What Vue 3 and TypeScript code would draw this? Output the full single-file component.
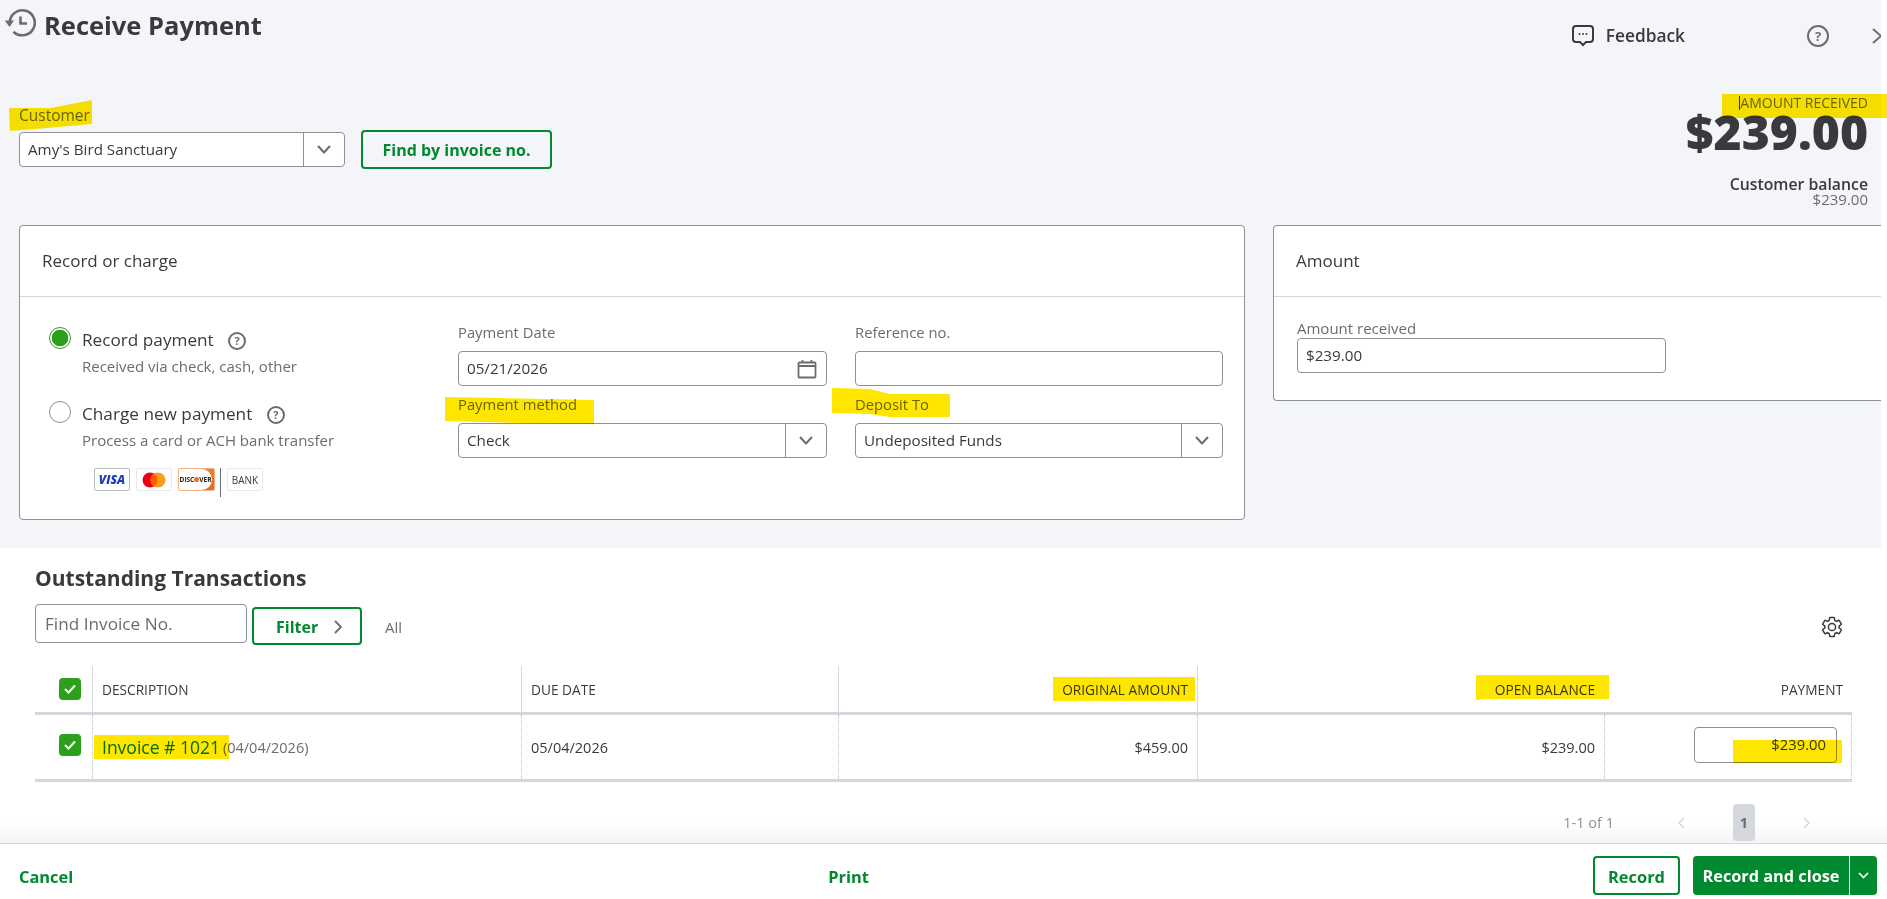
<template>
  <div class="page">
    <section class="top">
      <header class="title-bar">
        <svg class="history" width="32" height="32" viewBox="0 0 32 32">
          <path d="M5.8 15A12.5 12.5 0 1 1 9.5 24.7" fill="none" stroke="#6b6c72" stroke-width="2.6" />
          <path d="M.8 13.5H10L5.5 20z" fill="#6b6c72" />
          <path d="M16.5 9.5v7H23" fill="none" stroke="#6b6c72" stroke-width="2.6" />
        </svg>
        <h1>Receive Payment</h1>
        <div class="title-actions">
          <svg width="22" height="23" viewBox="0 0 22 23">
            <path d="M4 2h14a3 3 0 0 1 3 3v10a3 3 0 0 1-3 3h-4l-3 3-3-3H4a3 3 0 0 1-3-3V5a3 3 0 0 1 3-3z" fill="none" stroke="#393a3d" stroke-width="2" />
            <circle cx="7.5" cy="10" r="1" fill="#393a3d" />
            <circle cx="11" cy="10" r="1" fill="#393a3d" />
            <circle cx="14.5" cy="10" r="1" fill="#393a3d" />
          </svg>
          <span class="feedback">Feedback</span>
          <span class="help help-lg">?</span>
          <svg class="drawer" width="9" height="16" viewBox="0 0 9 16">
            <path d="M1 1l8 7-8 7" fill="none" stroke="#6b6c72" stroke-width="2" />
          </svg>
        </div>
      </header>

      <div class="customer-row">
        <div class="customer">
          <label>Customer</label>
          <div class="customer-fields">
            <div class="select customer-select">
              <span class="select-value">Amy's Bird Sanctuary</span>
              <span class="select-arrow">
                <svg width="14" height="9" viewBox="0 0 14 9"><path d="M1 1l6 6.5L13 1" fill="none" stroke="#6b6c72" stroke-width="2" /></svg>
              </span>
            </div>
            <button class="btn btn-outline find-btn">Find by invoice no.</button>
          </div>
        </div>
        <div class="total">
          <div class="total-label"><span class="caret"></span>AMOUNT RECEIVED</div>
          <div class="total-value">$239.00</div>
          <div class="balance-label">Customer balance</div>
          <div class="balance-value">$239.00</div>
        </div>
      </div>

      <div class="cards">
        <div class="card record-card">
          <div class="card-head">Record or charge</div>
          <div class="card-body">
            <div class="pay-opts">
              <div class="opt">
                <span class="radio radio-on"></span>
                <div>
                  <div class="opt-title">Record payment <span class="help">?</span></div>
                  <div class="opt-sub">Received via check, cash, other</div>
                </div>
              </div>
              <div class="opt opt-2">
                <span class="radio"></span>
                <div>
                  <div class="opt-title">Charge new payment <span class="help">?</span></div>
                  <div class="opt-sub">Process a card or ACH bank transfer</div>
                </div>
              </div>
              <div class="logos">
                <span class="logo logo-visa">VISA</span>
                <span class="logo logo-mc">
                  <svg width="24" height="16" viewBox="0 0 24 16">
                    <circle cx="8" cy="8" r="7.5" fill="#eb001b" />
                    <circle cx="16" cy="8" r="7.5" fill="#f79e1b" />
                    <path d="M12 1.6a7.5 7.5 0 0 1 0 12.8a7.5 7.5 0 0 1 0-12.8z" fill="#ff5f00" />
                  </svg>
                </span>
                <span class="logo logo-disc"><span class="disc-inner">DISC<i></i>VER</span></span>
                <span class="logo-sep"></span>
                <span class="logo logo-bank">BANK</span>
              </div>
            </div>
            <div class="fields">
              <div class="field">
                <label>Payment Date</label>
                <div class="input">
                  05/21/2026
                  <svg class="cal" width="20" height="20" viewBox="0 0 20 20">
                    <path d="M2.5 3.5h15a1 1 0 0 1 1 1v13a1 1 0 0 1-1 1h-15a1 1 0 0 1-1-1v-13a1 1 0 0 1 1-1z" fill="none" stroke="#6b6c72" stroke-width="1.8" />
                    <path d="M1.5 7h17M5.5 1v3M14.5 1v3" fill="none" stroke="#6b6c72" stroke-width="1.8" />
                  </svg>
                </div>
              </div>
              <div class="field">
                <label>Reference no.</label>
                <div class="input"></div>
              </div>
              <div class="field">
                <label>Payment method</label>
                <div class="select">
                  <span class="select-value">Check</span>
                  <span class="select-arrow">
                    <svg width="14" height="9" viewBox="0 0 14 9"><path d="M1 1l6 6.5L13 1" fill="none" stroke="#6b6c72" stroke-width="2" /></svg>
                  </span>
                </div>
              </div>
              <div class="field">
                <label>Deposit To</label>
                <div class="select">
                  <span class="select-value">Undeposited Funds</span>
                  <span class="select-arrow">
                    <svg width="14" height="9" viewBox="0 0 14 9"><path d="M1 1l6 6.5L13 1" fill="none" stroke="#6b6c72" stroke-width="2" /></svg>
                  </span>
                </div>
              </div>
            </div>
          </div>
        </div>

        <div class="card amount-card">
          <div class="card-head">Amount</div>
          <div class="amount-body">
            <label>Amount received</label>
            <div class="input amount-input">$239.00</div>
          </div>
        </div>
      </div>
    </section>

    <section class="bottom">
      <h2>Outstanding Transactions</h2>
      <div class="toolbar">
        <div class="find-input">Find Invoice No.</div>
        <button class="btn btn-outline filter-btn">
          Filter
          <svg width="8" height="14" viewBox="0 0 8 14"><path d="M1 1l6 6-6 6" fill="none" stroke="#6b6c72" stroke-width="1.8" /></svg>
        </button>
        <span class="all">All</span>
        <svg class="gear" width="24" height="24" viewBox="0 0 24 24">
          <path d="M19.14 12.94c.04-.3.06-.61.06-.94 0-.32-.02-.64-.07-.94l2.03-1.58c.18-.14.23-.41.12-.61l-1.92-3.32c-.12-.22-.37-.29-.59-.22l-2.39.96c-.5-.38-1.03-.7-1.62-.94l-.36-2.54c-.04-.24-.24-.41-.48-.41h-3.84c-.24 0-.43.17-.47.41l-.36 2.54c-.59.24-1.13.57-1.62.94l-2.39-.96c-.22-.08-.47 0-.59.22L2.74 8.87c-.12.21-.08.47.12.61l2.03 1.58c-.05.3-.09.63-.09.94s.02.64.07.94l-2.03 1.58c-.18.14-.23.41-.12.61l1.92 3.32c.12.22.37.29.59.22l2.39-.96c.5.38 1.03.7 1.62.94l.36 2.54c.05.24.24.41.48.41h3.84c.24 0 .44-.17.47-.41l.36-2.54c.59-.24 1.13-.56 1.62-.94l2.39.96c.22.08.47 0 .59-.22l1.92-3.32c.12-.22.07-.47-.12-.61l-2.01-1.58zM12 15.6c-1.98 0-3.6-1.62-3.6-3.6s1.62-3.6 3.6-3.6 3.6 1.62 3.6 3.6-1.62 3.6-3.6 3.6z" fill="none" stroke="#393a3d" stroke-width="1.5" />
        </svg>
      </div>

      <div class="table">
        <div class="tr th">
          <div class="td td-check"><span class="check"><svg width="14" height="12" viewBox="0 0 14 12"><path d="M2 6l3.5 3.5L12 2.5" fill="none" stroke="#fff" stroke-width="2" /></svg></span></div>
          <div class="td">DESCRIPTION</div>
          <div class="td">DUE DATE</div>
          <div class="td right">ORIGINAL AMOUNT</div>
          <div class="td right">OPEN BALANCE</div>
          <div class="td right no-line">PAYMENT</div>
        </div>
        <div class="tr body-row">
          <div class="td td-check"><span class="check"><svg width="14" height="12" viewBox="0 0 14 12"><path d="M2 6l3.5 3.5L12 2.5" fill="none" stroke="#fff" stroke-width="2" /></svg></span></div>
          <div class="td"><a class="invoice">Invoice # 1021</a> <span class="inv-date">(04/04/2026)</span></div>
          <div class="td">05/04/2026</div>
          <div class="td right">$459.00</div>
          <div class="td right">$239.00</div>
          <div class="td right pay-cell"><div class="pay-input">$239.00</div></div>
        </div>
      </div>

      <div class="pager">
        <span class="pager-count">1-1 of 1</span>
        <svg class="pager-prev" width="7" height="12" viewBox="0 0 7 12"><path d="M6 1L1 6l5 5" fill="none" stroke="#d4d7dc" stroke-width="1.5" /></svg>
        <span class="pager-page">1</span>
        <svg class="pager-next" width="7" height="12" viewBox="0 0 7 12"><path d="M1 1l5 5-5 5" fill="none" stroke="#d4d7dc" stroke-width="1.5" /></svg>
      </div>
    </section>

    <footer class="footer">
      <a class="foot-link">Cancel</a>
      <a class="foot-link print">Print</a>
      <div class="foot-actions">
        <button class="btn btn-outline record-btn">Record</button>
        <div class="btn-split">
          <span class="split-main">Record and close</span>
          <span class="split-arrow">
            <svg width="11" height="7" viewBox="0 0 11 7"><path d="M1 1l4.5 4.5L10 1" fill="none" stroke="#fff" stroke-width="1.6" /></svg>
          </span>
        </div>
      </div>
    </footer>

    <!-- marker strokes that were drawn on top of the screenshot -->
    <svg class="marks" width="1887" height="899" viewBox="0 0 1887 899">
      <polygon v-for="m in marks" :key="m" :points="m" fill="#ffe600" />
    </svg>
  </div>
</template>

<script setup lang="ts">
const marks: string[] = [
  '9,108 51,108 92,100 92,124 47,128 10,131',
  '1722,94 1887,94 1887,118 1722,118',
  '445,397 594,400 594,424 520,423 445,421',
  '832,388 870,389 890,394 950,394 950,417 890,417 870,414 832,413',
  '1053,677 1195,677 1195,701 1053,701',
  '1476,675 1609,675 1609,699 1486,699 1476,700',
  '94,735 229,735 229,759 94,759',
  '1733,740 1842,740 1842,763 1733,763'
]
</script>

<style>
html, body {
  margin: 0;
  background: #fff;
}
</style>

<style scoped>
.page {
  position: relative;
  width: 1887px;
  height: 899px;
  display: flex;
  flex-direction: column;
  overflow: hidden;
  background: #fff;
  color: #393a3d;
  font-family: "Open Sans", "Noto Sans", "Liberation Sans", sans-serif;
  font-size: 14.5px;
}

.top {
  width: 1881px;
  height: 548px;
  flex: none;
  background: #f4f5f8;
}

.title-bar {
  height: 94px;
  display: flex;
  align-items: flex-start;
}

.history {
  margin: 7px 0 0 4px;
}

h1 {
  margin: 9px 0 0 8px;
  font-size: 25.5px;
  line-height: 32px;
  font-weight: 700;
}

.title-actions {
  margin-left: auto;
  padding-top: 24px;
  display: flex;
  align-items: center;
  height: 23px;
}

.feedback {
  margin-left: 12px;
  font-size: 17.3px;
  font-weight: 600;
}

.help {
  display: inline-flex;
  align-items: center;
  justify-content: center;
  width: 18px;
  height: 18px;
  box-sizing: border-box;
  margin-left: 10px;
  border: 2px solid #6b6c72;
  border-radius: 50%;
  color: #6b6c72;
  font-size: 11px;
  font-weight: 700;
  vertical-align: 1px;
}

.help-lg {
  width: 22px;
  height: 22px;
  margin-left: 122px;
  font-size: 13px;
}

.drawer {
  margin-left: 43px;
}

.customer-row {
  height: 131px;
  display: flex;
  justify-content: space-between;
  padding: 0 13px 0 19px;
}

.customer {
  padding-top: 12px;
}

label {
  display: block;
  font-size: 14.8px;
  line-height: 18px;
  color: #6b6c72;
}

.customer label {
  font-size: 15.5px;
}

.customer-fields {
  display: flex;
  align-items: center;
  margin-top: 6px;
}

.select,
.input {
  box-sizing: border-box;
  height: 35px;
  background: #fff;
  border: 1px solid #8d9096;
  border-radius: 4px;
  display: flex;
  align-items: center;
  font-size: 15.2px;
}

.customer-select {
  width: 326px;
}

.select-value {
  flex: 1;
  margin-top: -2px;
  padding-left: 8px;
}

.select-arrow {
  width: 40px;
  height: 100%;
  display: flex;
  align-items: center;
  justify-content: center;
  border-left: 1px solid #8d9096;
}

.btn {
  box-sizing: border-box;
  font-family: inherit;
  font-weight: 700;
  font-size: 16px;
  cursor: pointer;
  border-radius: 4px;
}

.btn-outline {
  background: transparent;
  border: 2px solid #00892e;
  color: #00892e;
}

.find-btn {
  width: 191px;
  height: 39px;
  margin-left: 16px;
  padding: 0;
}

.total {
  text-align: right;
}

.total-label {
  font-size: 14px;
  line-height: 18px;
  color: #6b6c72;
}

.caret {
  display: inline-block;
  width: 1px;
  height: 14px;
  background: #393a3d;
  vertical-align: -2px;
}

.total-value {
  font-size: 48px;
  line-height: 40px;
  font-weight: 800;
}

.balance-label {
  margin-top: 22px;
  font-size: 15.8px;
  line-height: 20px;
  font-weight: 600;
}

.balance-value {
  margin-top: -3px;
  font-size: 15px;
  line-height: 16px;
  color: #6b6c72;
}

.cards {
  display: flex;
  align-items: flex-start;
  gap: 28px;
  padding-left: 19px;
}

.card {
  box-sizing: border-box;
  background: #fff;
  border: 1px solid #8d9096;
  border-radius: 4px;
}

.record-card {
  width: 1226px;
  height: 295px;
}

.amount-card {
  flex: 1;
  height: 176px;
  border-right: 0;
  border-radius: 4px 0 0 4px;
}

.card-head {
  box-sizing: border-box;
  height: 71px;
  padding: 24px 0 0 22px;
  line-height: 22px;
  font-size: 17px;
  border-bottom: 1px solid #d4d7dc;
}

.card-body {
  display: flex;
}

.pay-opts {
  width: 438px;
  flex: none;
  box-sizing: border-box;
  padding: 32px 0 0 29px;
}

.opt {
  display: flex;
  gap: 11px;
}

.opt-2 {
  margin-top: 28px;
}

.radio {
  width: 22px;
  height: 22px;
  box-sizing: border-box;
  flex: none;
  margin-top: -2px;
  border: 1px solid #8d9096;
  border-radius: 50%;
  background: #fff;
}

.radio-on {
  border-color: #2ca01c;
  background: radial-gradient(circle, #2ca01c 0 8px, #fff 8.6px);
}

.opt-title {
  font-size: 17.2px;
  line-height: 22px;
}

.opt-sub {
  margin-top: 6px;
  font-size: 15px;
  line-height: 18px;
  color: #6b6c72;
}

.logos {
  display: flex;
  align-items: flex-start;
  margin: 19px 0 0 45px;
}

.logo {
  box-sizing: border-box;
  width: 36px;
  height: 23px;
  margin-right: 6px;
  display: flex;
  align-items: center;
  justify-content: center;
  background: #fff;
  border: 1px solid #e8e9eb;
  border-radius: 2px;
}

.logo-visa {
  border-color: #babec5;
  color: #1a3fb5;
  font-size: 12px;
  font-weight: 800;
  font-style: italic;
}

.logo-disc {
  width: 37px;
  margin-right: 5px;
  justify-content: flex-start;
  border: 1px solid #f4b183;
  background: linear-gradient(135deg, #f9a03f, #e8681d);
  overflow: hidden;
}

.disc-inner {
  width: 33px;
  height: 100%;
  display: flex;
  align-items: center;
  justify-content: center;
  background: #fff;
  border-radius: 0 11px 11px 0;
  color: #222;
  font-size: 6.5px;
  font-weight: 700;
}

.disc-inner i {
  width: 5px;
  height: 5px;
  border-radius: 50%;
  background: #f26e21;
}

.logo-sep {
  width: 1px;
  height: 29px;
  margin-right: 6px;
  background: #6b6c72;
}

.logo-bank {
  margin-right: 0;
  font-size: 10px;
  color: #393a3d;
}

.fields {
  display: grid;
  grid-template-columns: 369px 368px;
  column-gap: 28px;
  row-gap: 9px;
  align-content: start;
  padding-top: 26px;
}

.field label {
  margin-bottom: 10px;
}

.input {
  padding: 0 0 2px 8px;
  justify-content: space-between;
}

.cal {
  margin: 2px 9px 0 0;
}

.amount-body {
  padding: 22px 0 0 23px;
}

.amount-body label {
  margin-bottom: 1px;
  font-size: 15px;
}

.amount-input {
  width: 369px;
}

.bottom {
  flex: 1;
  background: linear-gradient(#fff calc(100% - 20px), #f3f3f3);
}

h2 {
  margin: 0;
  padding: 17px 0 0 35px;
  font-size: 21px;
  line-height: 26px;
  font-weight: 700;
}

.toolbar {
  display: flex;
  align-items: flex-start;
  height: 41px;
  margin-top: 13px;
  padding: 0 43px 0 35px;
}

.find-input {
  box-sizing: border-box;
  width: 212px;
  height: 39px;
  padding-left: 9px;
  border: 1px solid #8d9096;
  border-radius: 4px;
  line-height: 37px;
  font-size: 17.2px;
  color: #6b6c72;
}

.filter-btn {
  width: 110px;
  height: 38px;
  margin: 3px 0 0 5px;
  display: flex;
  align-items: center;
  padding: 2px 0 0 22px;
  gap: 16px;
}

.all {
  margin: 13px 0 0 23px;
  color: #6b6c72;
  font-size: 15px;
}

.gear {
  margin: 11px 0 0 auto;
}

.table {
  width: 1817px;
  margin: 21px 0 0 35px;
}

.tr {
  display: grid;
  grid-template-columns: 57px 429px 317px 359px 407px 248px;
  box-sizing: border-box;
  border-bottom: 3px solid #d4d7dc;
}

.th {
  height: 49px;
  font-size: 13.7px;
}

.body-row {
  height: 67px;
  border-right: 1px dotted #babec5;
}

.td {
  display: flex;
  align-items: center;
  gap: 3px;
  padding: 0 9px;
  border-left: 1px solid #d4d7dc;
}

.body-row .td {
  border-left: 1px dotted #babec5;
}

.tr .td-check {
  border-left: 0;
  padding: 0 0 0 24px;
}

.tr .no-line {
  border-left: 0;
}

.right {
  justify-content: flex-end;
  text-align: right;
}

.check {
  width: 22px;
  height: 22px;
  display: flex;
  align-items: center;
  justify-content: center;
  border-radius: 4px;
  background: #2ca01c;
}

.body-row .check {
  margin-top: -4px;
}

.invoice {
  font-size: 17.5px;
  color: #0077c5;
}

.inv-date {
  color: #6b6c72;
}

.pay-input {
  box-sizing: border-box;
  width: 143px;
  height: 36px;
  margin: -4px 6px 0 0;
  padding-right: 10px;
  line-height: 33px;
  font-size: 14.8px;
  border: 1px solid #8d9096;
  border-radius: 4px;
}

.pay-cell {
  padding-right: 9px;
}

.pager {
  display: flex;
  align-items: center;
  justify-content: flex-end;
  height: 37px;
  margin-top: 22px;
  padding-right: 77px;
  color: #8d9096;
}

.pager-prev {
  margin-left: 64px;
}

.pager-page {
  width: 22px;
  height: 37px;
  margin-left: 48px;
  line-height: 37px;
  text-align: center;
  background: #d4d7dc;
  border-radius: 4px;
  color: #6b6c72;
  font-weight: 700;
}

.pager-next {
  margin-left: 48px;
}

.footer {
  height: 56px;
  flex: none;
  box-sizing: border-box;
  display: flex;
  align-items: flex-start;
  padding: 12px 10px 0 19px;
  border-top: 1px solid #d4d7dc;
}

.foot-link {
  font-size: 16.4px;
  font-weight: 700;
  line-height: 41px;
  color: #00892e;
}

.print {
  margin-left: 755px;
}

.foot-actions {
  margin-left: auto;
  display: flex;
  gap: 13px;
}

.record-btn {
  width: 87px;
  height: 39px;
  padding: 2px 0 0;
  font-size: 16.4px;
}

.btn-split {
  width: 184px;
  height: 39px;
  display: flex;
  border-radius: 4px;
  background: #00892e;
  color: #fff;
  font-size: 16.3px;
  font-weight: 700;
  line-height: 41px;
}

.split-main {
  width: 156px;
  text-align: center;
  border-right: 1px solid #fff;
}

.split-arrow {
  flex: 1;
  display: flex;
  align-items: center;
  justify-content: center;
}

.marks {
  position: absolute;
  left: 0;
  top: 0;
  mix-blend-mode: multiply;
  pointer-events: none;
}
</style>
